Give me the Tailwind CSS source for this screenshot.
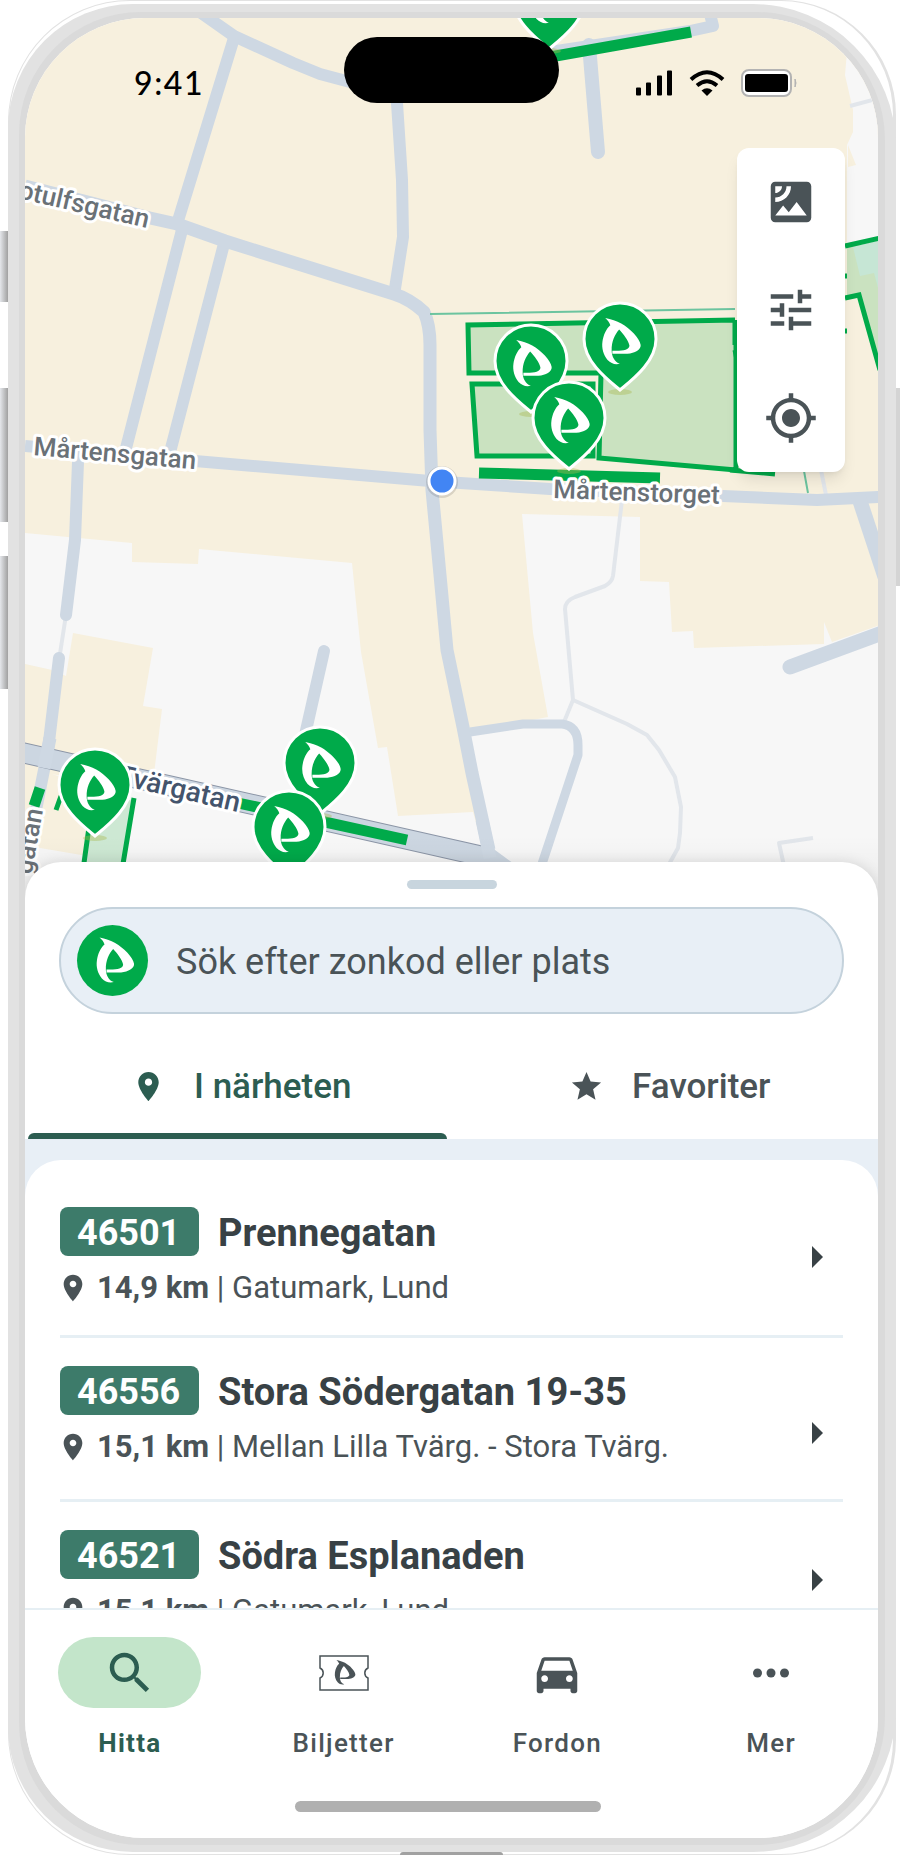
<!DOCTYPE html>
<html lang="sv">
<head>
  <meta charset="UTF-8" />
  <meta name="viewport" content="width=device-width, initial-scale=1" />
  <title>Hitta parkering</title>
  <script src="https://cdn.jsdelivr.net/npm/@tailwindcss/browser@4"></script>
  <style>
    body {
      font-family: Roboto, 'Noto Sans', sans-serif;
    }
  </style>
</head>
<body class="bg-white">
  <!-- Shared symbols -->
  <svg class="hidden" aria-hidden="true">
    <symbol id="logo" viewBox="-107 -107 214 214">
      <path d="M-39-69C-22-66-5-60 8-53C34-38 62-10 65 10C66 24 48 34 26 36L-18 36L-18 27C10 28 32 26 32 12C30-2 14-22 2-35C-10-22-21 0-20 27C-20 42-12 60 4 65C-10 69-22 64-32 54C-44 40-50 20-47 0C-44-20-36-38-24-48C-26-56-33-64-39-69Z" />
    </symbol>
    <symbol id="place" viewBox="0 0 24 24">
      <path d="M12 2C8.13 2 5 5.13 5 9c0 5.25 7 13 7 13s7-7.75 7-13c0-3.87-3.13-7-7-7zm0 9.5c-1.38 0-2.5-1.12-2.5-2.5s1.12-2.5 2.5-2.5 2.5 1.12 2.5 2.5-1.12 2.5-2.5 2.5z" />
    </symbol>
    <g id="pin">
      <ellipse cx="0" cy="53" rx="12" ry="3" fill="#a9b850" opacity=".4" />
      <path d="M0 51C-12 41-36 23-36 0A36 36 0 1 1 36 0C36 23 12 41 0 51Z" fill="#00aa4a" stroke="#fff" stroke-width="3" />
      <use href="#logo" x="-38" y="-34" width="73" height="73" fill="#fff" />
    </g>
  </svg>

  <div class="relative h-screen pl-2 pr-1 pt-1 pb-[3px]">
    <!-- Side buttons and outer rim -->
    <div class="absolute left-0 top-[231px] w-2 h-[71px] bg-linear-to-r from-gray-200 to-neutral-400"></div>
    <div class="absolute left-0 top-[388px] w-2 h-[134px] bg-linear-to-r from-gray-200 to-neutral-400"></div>
    <div class="absolute left-0 top-[556px] w-2 h-[133px] bg-linear-to-r from-gray-200 to-neutral-400"></div>
    <div class="absolute right-0 top-[388px] w-1 h-[198px] bg-neutral-300"></div>
    <div class="absolute inset-y-0 left-2 right-1 bg-white border-r-3 border-y border-l border-[#e2e2e2] rounded-l-[122px] rounded-r-[115px]"></div>
    <div class="absolute bottom-0 left-[400px] w-[103px] h-[3px] bg-neutral-400 rounded-t"></div>

    <div class="relative h-full bg-[#e2e2e2] rounded-l-[125px] rounded-r-[143px] px-[11px] pt-2 pb-[7px]">
      <div class="h-full bg-[#dadada] rounded-l-[122px] rounded-r-[128px] pl-[6px] pr-[7px] pt-[6px] pb-[7px]">
        <div class="relative h-full flex flex-col bg-white rounded-[120px] overflow-hidden">

          <!-- Map -->
          <svg class="w-full h-auto shrink-0" viewBox="25 18 853 888" role="img" aria-label="Karta">
            <defs>
              <linearGradient id="fade" x1="0" y1="0" x2="0" y2="1">
                <stop offset="0" stop-color="#000" stop-opacity="0" />
                <stop offset="1" stop-color="#000" stop-opacity=".06" />
              </linearGradient>
            </defs>
            <rect x="25" y="18" width="853" height="888" fill="#f7f0de" />

            <g fill="#f7f7f7">
              <path d="M25 533L132 543V562L198 564L199 549L352 563L361 652L378 748L387 747L398 816L473 812L500 906H25Z" />
              <path d="M522 514L640 517V581L669 582L672 632L693 631L694 648L824 644V622L832 642L880 625V906H490L470 732L548 717L533 633Z" />
              <path d="M848 40L845 75L853 110V132L847 145V245H880V40Z" />
            </g>
            <g fill="#f7f0de">
              <path d="M25 664L52 670L66 676L73 633L153 648L143 706L162 709L152 790L25 770Z" />
              <path d="M25 765L130 800L93 857L40 848H25Z" />
              <path d="M848 145L856 165L848 167Z" />
            </g>

            <!-- Footpaths -->
            <g fill="none" stroke="#e2e6eb" stroke-width="4" stroke-linejoin="round">
              <path d="M622 500L613 576Q612 582 605 586L575 597Q565 601 565 609L573 700L564 722" />
              <path d="M573 700L627 724L647 735L659 750L675 777L681 807L680 833L678 848L668 866" />
              <path d="M784 866L779 843L813 838" />
              <path d="M66 615L59 660" />
              <path d="M820 465L826 495" />
              <path d="M850 106L880 98" />
            </g>

            <!-- Streets -->
            <g fill="none" stroke="#ced8e3" stroke-width="12" stroke-linejoin="round">
              <path d="M197 10L234 36L293 63L320 74L350 82L397 86" />
              <path d="M397 80V103L402 180L403 237L394 295" />
              <path d="M234 38L177 224M183 226L124 456M225 240L168 460" />
              <path d="M25 186L150 218L177 224L225 241L394 294Q410 299 424 312Q430 325 430 345V430L432 490L440 575L447 650L463 727L472 773L489 850" stroke-width="13" />
              <path d="M25 446L195 461L430 481L550 489L723 496L817 500L880 497" />
              <path d="M78 462L75 540L66 615" stroke-linecap="round" />
              <path d="M59 658L48 750L34 820" stroke-linecap="round" />
              <path d="M324 651L305 735" stroke-linecap="round" />
              <path d="M470 732L523 724H562Q578 726 578 745V755L540 870" stroke-width="9" />
              <path d="M790 667L882 633" stroke-width="15" stroke-linecap="round" />
              <path d="M858 495L885 577" stroke-width="15" />
              <path d="M589 45L598 152" stroke-width="14" stroke-linecap="round" />
              <path d="M550 52L690 31L713 26L709 10" />
            </g>
            <path d="M15 751L450 849L490 858" fill="none" stroke="#8b95a6" stroke-width="21" />
            <path d="M15 751L450 849L490 858L520 880" fill="none" stroke="#ccd6e1" stroke-width="19" />
            <path d="M50 738L44 768M482 820L490 858" stroke="#ced8e3" stroke-width="13" />

            <!-- Parking zones -->
            <g fill="#cae2c0" stroke="#00aa4a" stroke-width="5">
              <path d="M735 320L468 325L469 373H601L599 458L736 470V320" />
              <path d="M472 384H593V456H477Z" />
              <path d="M134 798L122 870H83L90 820" fill="#cde8d3" />
            </g>
            <path d="M847 245H880V370L859 295L847 298Z" fill="#cae2c0" />
            <path d="M853 247L880 240V295L874 273L860 276Z" fill="#c6e6d5" />
            <g fill="none" stroke="#00aa4a">
              <path d="M845 246L880 238M845 298L859 295L880 370M730 470L775 474M735 322V345M735 350L740 375M843 276H847M843 331H847M56 810L61 796" stroke-width="5" />
              <path d="M479 473L660 478M550 57L691 32M238 803L407 840M40 788L34 806" stroke-width="11" />
            </g>
            <path d="M430 314L735 309M804 471L808 493" fill="none" stroke="#6cc49f" stroke-width="2" />

            <!-- Street names -->
            <g font-family="Roboto, sans-serif" font-size="26" font-weight="500" fill="#6a7177" stroke="#fff" stroke-width="6" stroke-linejoin="round" paint-order="stroke">
              <text text-anchor="end" transform="translate(147 228) rotate(13)">Botulfsgatan</text>
              <text transform="translate(33 455) rotate(5)">Mårtensgatan</text>
              <text transform="translate(553 498) rotate(2)">Mårtenstorget</text>
              <text text-anchor="end" transform="translate(238 812) rotate(13)" font-size="28" fill="#44546c">Tvärgatan</text>
              <text text-anchor="end" transform="translate(43 810) rotate(-80)">gatan</text>
            </g>

            <circle cx="442" cy="482" r="16" fill="#000" opacity=".12" />
            <circle cx="442" cy="481" r="13" fill="#4285f4" stroke="#fff" stroke-width="3" />

            <use href="#pin" x="549" y="-2" />
            <use href="#pin" x="531" y="361" />
            <use href="#pin" x="620" y="339" />
            <use href="#pin" x="569" y="418" />
            <use href="#pin" x="95" y="785" />
            <use href="#pin" x="320" y="763" />
            <use href="#pin" x="289" y="827" />
            <rect x="25" y="836" width="853" height="70" fill="url(#fade)" />
          </svg>

          <!-- Status bar -->
          <div class="absolute inset-x-0 top-[19px] h-[79px] grid grid-cols-[1fr_215px_1fr] items-end text-black">
            <div class="h-[66px] flex items-center pl-[109px] text-[32px] leading-9 font-medium font-[Lato] tracking-wider">9:41</div>
            <div class="h-[66px] self-start rounded-full bg-black"></div>
            <div class="h-[66px] flex items-center justify-end gap-4 pr-[81px]">
              <svg class="w-[38px] h-[26px]" viewBox="0 0 38 26">
                <path d="M2 18.500h3v6h-3zM12 13.500h3v11h-3zM23 6.500h3v18h-3zM33 1.500h3v23h-3z" stroke="#000" stroke-width="2" stroke-linejoin="round" />
              </svg>
              <svg class="w-9 h-[26px]" viewBox="0 0 36 26" fill="none" stroke="#000" stroke-width="4">
                <path d="M2 9.500Q18-5 34 9.500M8 15.500Q18 7 28 15.500" />
                <path d="M12.500 20.500Q18 16 23.500 20.500L18 26Z" fill="#000" stroke="none" />
              </svg>
              <svg class="w-14 h-7" viewBox="0 0 56 28">
                <rect x="1" y="1" width="49" height="26" rx="7" fill="#fff" stroke="#b3b3b3" stroke-width="2" />
                <rect x="4" y="5" width="43" height="18" rx="3" />
                <path d="M54 10Q56 14 54 18Z" fill="#b3b3b3" stroke="#b3b3b3" />
              </svg>
            </div>
          </div>

          <!-- Map tools -->
          <div class="absolute top-[130px] right-[33px] w-[108px] flex flex-col bg-white rounded-xl shadow-lg text-[#4a5357]">
            <button type="button" aria-label="Karttyp" class="h-[108px] flex items-center justify-center">
              <svg class="size-[54px]" viewBox="0 0 24 24" fill="currentColor"><path d="M19 3H5c-1.100 0-2 .9-2 2v14c0 1.100.9 2 2 2h14c1.100 0 2-.9 2-2V5c0-1.100-.9-2-2-2zM5 4.990h3C8 6.650 6.660 8 5 8V4.990zM5 12v-2c2.760 0 5-2.250 5-5.010h2C12 8.860 8.870 12 5 12zm0 6l3.500-4.500 2.500 3.010L14.500 12l4.500 6H5z" /></svg>
            </button>
            <button type="button" aria-label="Filter" class="h-[108px] flex items-center justify-center">
              <svg class="size-[54px]" viewBox="0 0 24 24" fill="currentColor"><path d="M3 17v2h6v-2H3zM3 5v2h10V5H3zm10 16v-2h8v-2h-8v-2h-2v6h2zM7 9v2H3v2h4v2h2V9H7zm14 4v-2H11v2h10zm-6-4h2V7h4V5h-4V3h-2v6z" /></svg>
            </button>
            <button type="button" aria-label="Min position" class="h-[108px] flex items-center justify-center">
              <svg class="size-[54px]" viewBox="0 0 24 24" fill="currentColor"><path d="M12 8c-2.210 0-4 1.790-4 4s1.790 4 4 4 4-1.790 4-4-1.790-4-4-4zm8.940 3c-.46-4.170-3.770-7.480-7.940-7.940V1h-2v2.060C6.830 3.520 3.520 6.830 3.060 11H1v2h2.060c.46 4.170 3.770 7.480 7.940 7.940V23h2v-2.060c4.170-.46 7.480-3.770 7.940-7.940H23v-2h-2.060zM12 19c-3.870 0-7-3.130-7-7s3.130-7 7-7 7 3.130 7 7-3.130 7-7 7z" /></svg>
            </button>
          </div>

          <!-- Bottom sheet -->
          <main class="relative -mt-11 flex-1 min-h-0 flex flex-col bg-white rounded-t-[36px] shadow-[0_0_14px_rgba(0,0,0,0.12)]">
            <div class="mx-auto mt-[18px] w-[90px] h-[9px] shrink-0 rounded-full bg-[#c8d5de]"></div>

            <label class="mx-[34px] mt-[18px] h-[107px] shrink-0 flex items-center gap-7 pl-4 pr-8 rounded-full border-2 border-[#c4d2dc] bg-[#e8eff6]">
              <svg class="size-[71px] shrink-0 rounded-full bg-[#00aa4a] fill-white" aria-hidden="true"><use href="#logo" /></svg>
              <input type="search" aria-label="Sök" placeholder="Sök efter zonkod eller plats" class="flex-1 min-w-0 pt-[2px] bg-transparent outline-none text-[36px] leading-[42px] text-[#4a5357] placeholder:text-[#4a5357]" />
            </label>

            <div class="h-[125px] shrink-0 flex text-[35px] leading-[42px] font-medium">
              <button type="button" class="relative flex-1 flex items-center justify-center gap-7 pt-5 pl-2 text-[#2c5d51]">
                <svg class="size-[35px]" fill="currentColor"><use href="#place" /></svg>
                I närheten
                <span class="absolute bottom-0 left-[3px] right-[3px] h-[6px] rounded-t-md bg-[#2c5d51]"></span>
              </button>
              <button type="button" class="flex-1 flex items-center justify-center gap-7 pt-5 pl-3 text-[#4a5357]">
                <svg class="size-[35px]" viewBox="0 0 24 24" fill="currentColor"><path d="M12 17.270L18.180 21l-1.640-7.030L22 9.240l-7.190-.61L12 2 9.190 8.630 2 9.240l5.460 4.730L5.820 21z" /></svg>
                Favoriter
              </button>
            </div>

            <div class="flex-1 min-h-0 bg-[#e8eff6] pt-[21px]">
              <ul class="h-full overflow-hidden bg-white rounded-t-[36px] px-[35px] pt-[19px]">
                <li class="border-b-3 border-[#e6eff4]">
                  <a href="#46501" class="flex items-center pt-7 pb-7">
                    <span class="flex-1 min-w-0 flex flex-col gap-[13px]">
                      <span class="h-[49px] flex items-center gap-[19px] text-[38px] leading-[53px] font-bold text-[#384145]">
                        <span class="w-[139px] h-[49px] pl-[17px] rounded-lg bg-[#3d7b6a] text-[36px] text-white">46501</span>
                        <span class="pt-1">Prennegatan</span>
                      </span>
                      <span class="flex items-center text-[31px] leading-[38px] text-[#4a5357] whitespace-nowrap">
                        <svg class="size-8 ml-[-3px] mr-2 shrink-0" fill="currentColor"><use href="#place" /></svg>
                        <span><b>14,9 km</b> | Gatumark, Lund</span>
                      </span>
                    </span>
                    <svg class="w-[11px] h-[22px] mr-5" viewBox="0 0 11 22" fill="#384145"><path d="M0 0L11 11L0 22Z" /></svg>
                  </a>
                </li>
                <li class="border-b-3 border-[#e6eff4]">
                  <a href="#46556" class="flex items-center pt-7">
                    <span class="flex-1 min-w-0 flex flex-col gap-[13px] pb-[33px]">
                      <span class="h-[49px] flex items-center gap-[19px] text-[38px] leading-[53px] font-bold text-[#384145]">
                        <span class="w-[139px] h-[49px] pl-[17px] rounded-lg bg-[#3d7b6a] text-[36px] text-white">46556</span>
                        <span class="pt-1">Stora Södergatan 19-35</span>
                      </span>
                      <span class="flex items-center text-[31px] leading-[38px] text-[#4a5357] whitespace-nowrap">
                        <svg class="size-8 ml-[-3px] mr-2 shrink-0" fill="currentColor"><use href="#place" /></svg>
                        <span><b>15,1 km</b> | Mellan Lilla Tvärg. - Stora Tvärg.</span>
                      </span>
                    </span>
                    <svg class="w-[11px] h-[22px] mr-5" viewBox="0 0 11 22" fill="#384145"><path d="M0 0L11 11L0 22Z" /></svg>
                  </a>
                </li>
                <li>
                  <a href="#46521" class="flex items-center pt-7 pb-7">
                    <span class="flex-1 min-w-0 flex flex-col gap-[13px]">
                      <span class="h-[49px] flex items-center gap-[19px] text-[38px] leading-[53px] font-bold text-[#384145]">
                        <span class="w-[139px] h-[49px] pl-[17px] rounded-lg bg-[#3d7b6a] text-[36px] text-white">46521</span>
                        <span class="pt-1">Södra Esplanaden</span>
                      </span>
                      <span class="flex items-center text-[31px] leading-[38px] text-[#4a5357] whitespace-nowrap">
                        <svg class="size-8 ml-[-3px] mr-2 shrink-0" fill="currentColor"><use href="#place" /></svg>
                        <span><b>15,1 km</b> | Gatumark, Lund</span>
                      </span>
                    </span>
                    <svg class="w-[11px] h-[22px] mr-5" viewBox="0 0 11 22" fill="#384145"><path d="M0 0L11 11L0 22Z" /></svg>
                  </a>
                </li>
              </ul>
            </div>
          </main>

          <!-- Tab bar -->
          <footer class="relative shrink-0 bg-white border-t-2 border-[#e6eff4] pt-[27px] pb-[26px]">
            <nav class="-ml-[2px] flex text-[26px] leading-[30px] font-medium tracking-wider text-[#4a5357]">
              <a href="#hitta" aria-current="page" class="flex-1 flex flex-col items-center gap-5 font-bold text-[#2c5d51]">
                <span class="w-[143px] h-[71px] flex items-center justify-center rounded-full bg-[#c3e5ca]">
                  <svg class="size-[54px]" viewBox="0 0 24 24" fill="currentColor"><path d="M15.500 14h-.79l-.28-.27C15.410 12.590 16 11.110 16 9.500 16 5.910 13.090 3 9.500 3S3 5.910 3 9.500 5.910 16 9.500 16c1.610 0 3.090-.59 4.230-1.570l.27.28v.79l5 4.990L20.490 19l-4.990-5zm-6 0C7.010 14 5 11.990 5 9.500S7.010 5 9.500 5 14 7.010 14 9.500 11.990 14 9.500 14z" /></svg>
                </span>
                Hitta
              </a>
              <a href="#biljetter" class="flex-1 flex flex-col items-center gap-5">
                <span class="h-[71px] flex items-center">
                  <svg class="w-[50px] h-9" viewBox="0 0 50 36">
                    <path d="M1 1H49V13A5.500 5.500 0 0 0 49 23V35H1V23A5.500 5.500 0 0 0 1 13Z" fill="none" stroke="currentColor" stroke-width="1.500" />
                    <use href="#logo" x="5" y="-2" width="39" height="39" fill="currentColor" />
                  </svg>
                </span>
                Biljetter
              </a>
              <a href="#fordon" class="flex-1 flex flex-col items-center gap-5">
                <span class="h-[71px] flex items-center">
                  <svg class="size-[54px]" viewBox="0 0 24 24" fill="currentColor"><path d="M18.920 6.010C18.720 5.420 18.160 5 17.500 5h-11c-.66 0-1.210.42-1.420 1.010L3 12v8c0 .55.45 1 1 1h1c.55 0 1-.45 1-1v-1h12v1c0 .55.45 1 1 1h1c.55 0 1-.45 1-1v-8l-2.080-5.990zM6.500 16c-.83 0-1.500-.67-1.500-1.500S5.670 13 6.500 13s1.500.67 1.500 1.500S7.330 16 6.500 16zm11 0c-.83 0-1.500-.67-1.500-1.500s.67-1.500 1.500-1.500 1.500.67 1.500 1.500-.67 1.500-1.500 1.500zM5 11l1.500-4.500h11L19 11H5z" /></svg>
                </span>
                Fordon
              </a>
              <a href="#mer" class="flex-1 flex flex-col items-center gap-5">
                <span class="h-[71px] flex items-center">
                  <svg class="size-[54px]" viewBox="0 0 24 24" fill="currentColor"><circle cx="6" cy="12" r="2" /><circle cx="12" cy="12" r="2" /><circle cx="18" cy="12" r="2" /></svg>
                </span>
                Mer
              </a>
            </nav>
            <div class="mt-[43px] pr-2">
              <div class="mx-auto w-[306px] h-[11px] rounded-full bg-[#b0b0b0]"></div>
            </div>
          </footer>
        </div>
      </div>
    </div>
  </div>
</body>
</html>
